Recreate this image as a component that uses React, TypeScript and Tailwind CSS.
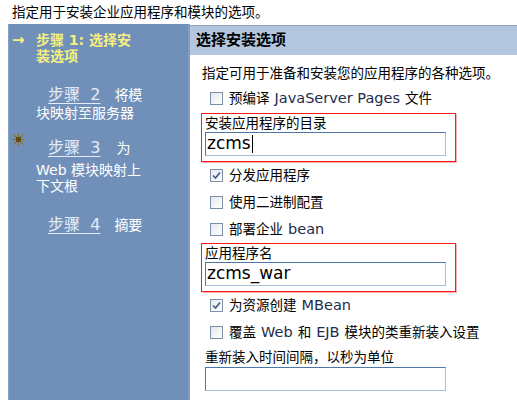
import React from 'react'

const font = "font-['DejaVu_Sans','Noto_Sans_CJK_SC',sans-serif]"

function Box({ checked }: { checked?: boolean }) {
  return (
    <span className="w-[13px] h-[13px] border border-[#7d8ea6] bg-gradient-to-br from-[#e4e8ee] to-white flex items-center justify-center shrink-0">
      {checked && (
        <svg width="9" height="9" viewBox="0 0 9 9">
          <path d="M1 4.5 L3.5 7 L8 1.5" fill="none" stroke="#3b5b8f" strokeWidth="1.6" />
        </svg>
      )}
    </span>
  )
}

function Row({ checked, children }: { checked?: boolean; children: React.ReactNode }) {
  return (
    <div className="h-[27px] flex items-center pl-[9px] gap-[6px] text-[13.5px] text-black">
      <Box checked={checked} />
      <span>{children}</span>
    </div>
  )
}

const L = ({ children }: { children: React.ReactNode }) => (
  <span className="text-[14.5px] text-[#1e2c4c] mx-[5px]">{children}</span>
)

function Field({ value, caret }: { value?: string; caret?: boolean }) {
  return (
    <div className="w-[241px] h-[24px] bg-white border border-t-[#4d77a8] border-l-[#4d77a8] border-r-[#a8bed6] border-b-[#a8bed6] flex items-center pl-[1px] text-[17px] text-black">
      {value}
      {caret && <span className="w-px h-[18px] bg-black ml-px" />}
    </div>
  )
}

function RedBox({ label, value, caret }: { label: string; value: string; caret?: boolean }) {
  return (
    <div className="w-[255px] border border-[#ff1a1a] shadow-[1px_1px_0_#f7b0b3] pl-[3px] pb-[5px]">
      <div className="h-[18px] leading-[18px] text-[13.5px] text-black">{label}</div>
      <Field value={value} caret={caret} />
    </div>
  )
}

function Star() {
  return (
    <svg width="13" height="13" viewBox="0 0 13 13" className="absolute left-[3px] top-[-5px]">
      <path d="M6.5 0 V13 M0 6.5 H13 M2 2 L11 11 M11 2 L2 11" stroke="#8a7428" strokeWidth="1.2" />
      <rect x="4" y="4" width="5" height="5" fill="#5e4c10" />
    </svg>
  )
}

function StepLink({ n }: { n: number }) {
  return <span className="text-[16px] text-[#e4ecf8] underline underline-offset-[3px] decoration-1">步骤&nbsp;&nbsp;{n}</span>
}

export default function App() {
  return (
    <div className={`w-[517px] h-[400px] bg-white overflow-hidden ${font}`}>
      <div className="h-[24px] pl-[12px] flex items-center text-[13.5px] text-black">指定用于安装企业应用程序和模块的选项。</div>
      <div className="flex pl-[8px] h-[376px]">
        <div className="w-[182px] shrink-0 bg-[#7190b9] border-l border-[#86a0c6] border-r-2 border-r-[#839dc2] text-white text-[14px]">
          <div className="relative mt-[8px] pl-[27px] leading-[16px] font-bold text-[#f6f07e]">
            <span className="absolute left-[3px] top-0 text-[15px]">→</span>
            <div>步骤 1: 选择安</div>
            <div>装选项</div>
          </div>
          <div className="mt-[21px] pl-[27px]">
            <div className="pl-[12px] leading-[20px]">
              <StepLink n={2} />
              <span className="ml-[14px]">将模</span>
            </div>
            <div className="leading-[16px]">块映射至服务器</div>
          </div>
          <div className="relative mt-[17px] pl-[27px]">
            <Star />
            <div className="pl-[12px] leading-[20px]">
              <StepLink n={3} />
              <span className="ml-[16px]">为</span>
            </div>
            <div className="leading-[16px] mt-[4px]">Web 模块映射上</div>
            <div className="leading-[16px]">下文根</div>
          </div>
          <div className="mt-[21px] pl-[27px]">
            <div className="pl-[12px] leading-[20px]">
              <StepLink n={4} />
              <span className="ml-[14px]">摘要</span>
            </div>
          </div>
        </div>
        <div className="flex-1 min-w-0">
          <div className="h-[30px] mt-px bg-[#b4c6de] border-t border-[#8aa4ca] pl-[6px] flex items-center text-[15px] font-bold text-black">
            选择安装选项
          </div>
          <div className="pl-[11px]">
            <div className="mt-[9px] pl-px leading-[18px] text-[13.5px] text-black">指定可用于准备和安装您的应用程序的各种选项。</div>
            <div className="mt-[3px]">
              <Row>预编译<L>JavaServer Pages</L>文件</Row>
            </div>
            <div className="mt-px">
              <RedBox label="安装应用程序的目录" value="zcms" caret />
            </div>
            <Row checked>分发应用程序</Row>
            <Row>使用二进制配置</Row>
            <Row>部署企业<L>bean</L></Row>
            <RedBox label="应用程序名" value="zcms_war" />
            <Row checked>为资源创建<L>MBean</L></Row>
            <Row>覆盖<L>Web</L>和<L>EJB</L>模块的类重新装入设置</Row>
            <div className="mt-[2px] pl-[4px]">
              <div className="h-[18px] leading-[18px] text-[13.5px] text-black">重新装入时间间隔，以秒为单位</div>
              <div className="mt-px">
                <Field />
              </div>
            </div>
          </div>
        </div>
      </div>
    </div>
  )
}
